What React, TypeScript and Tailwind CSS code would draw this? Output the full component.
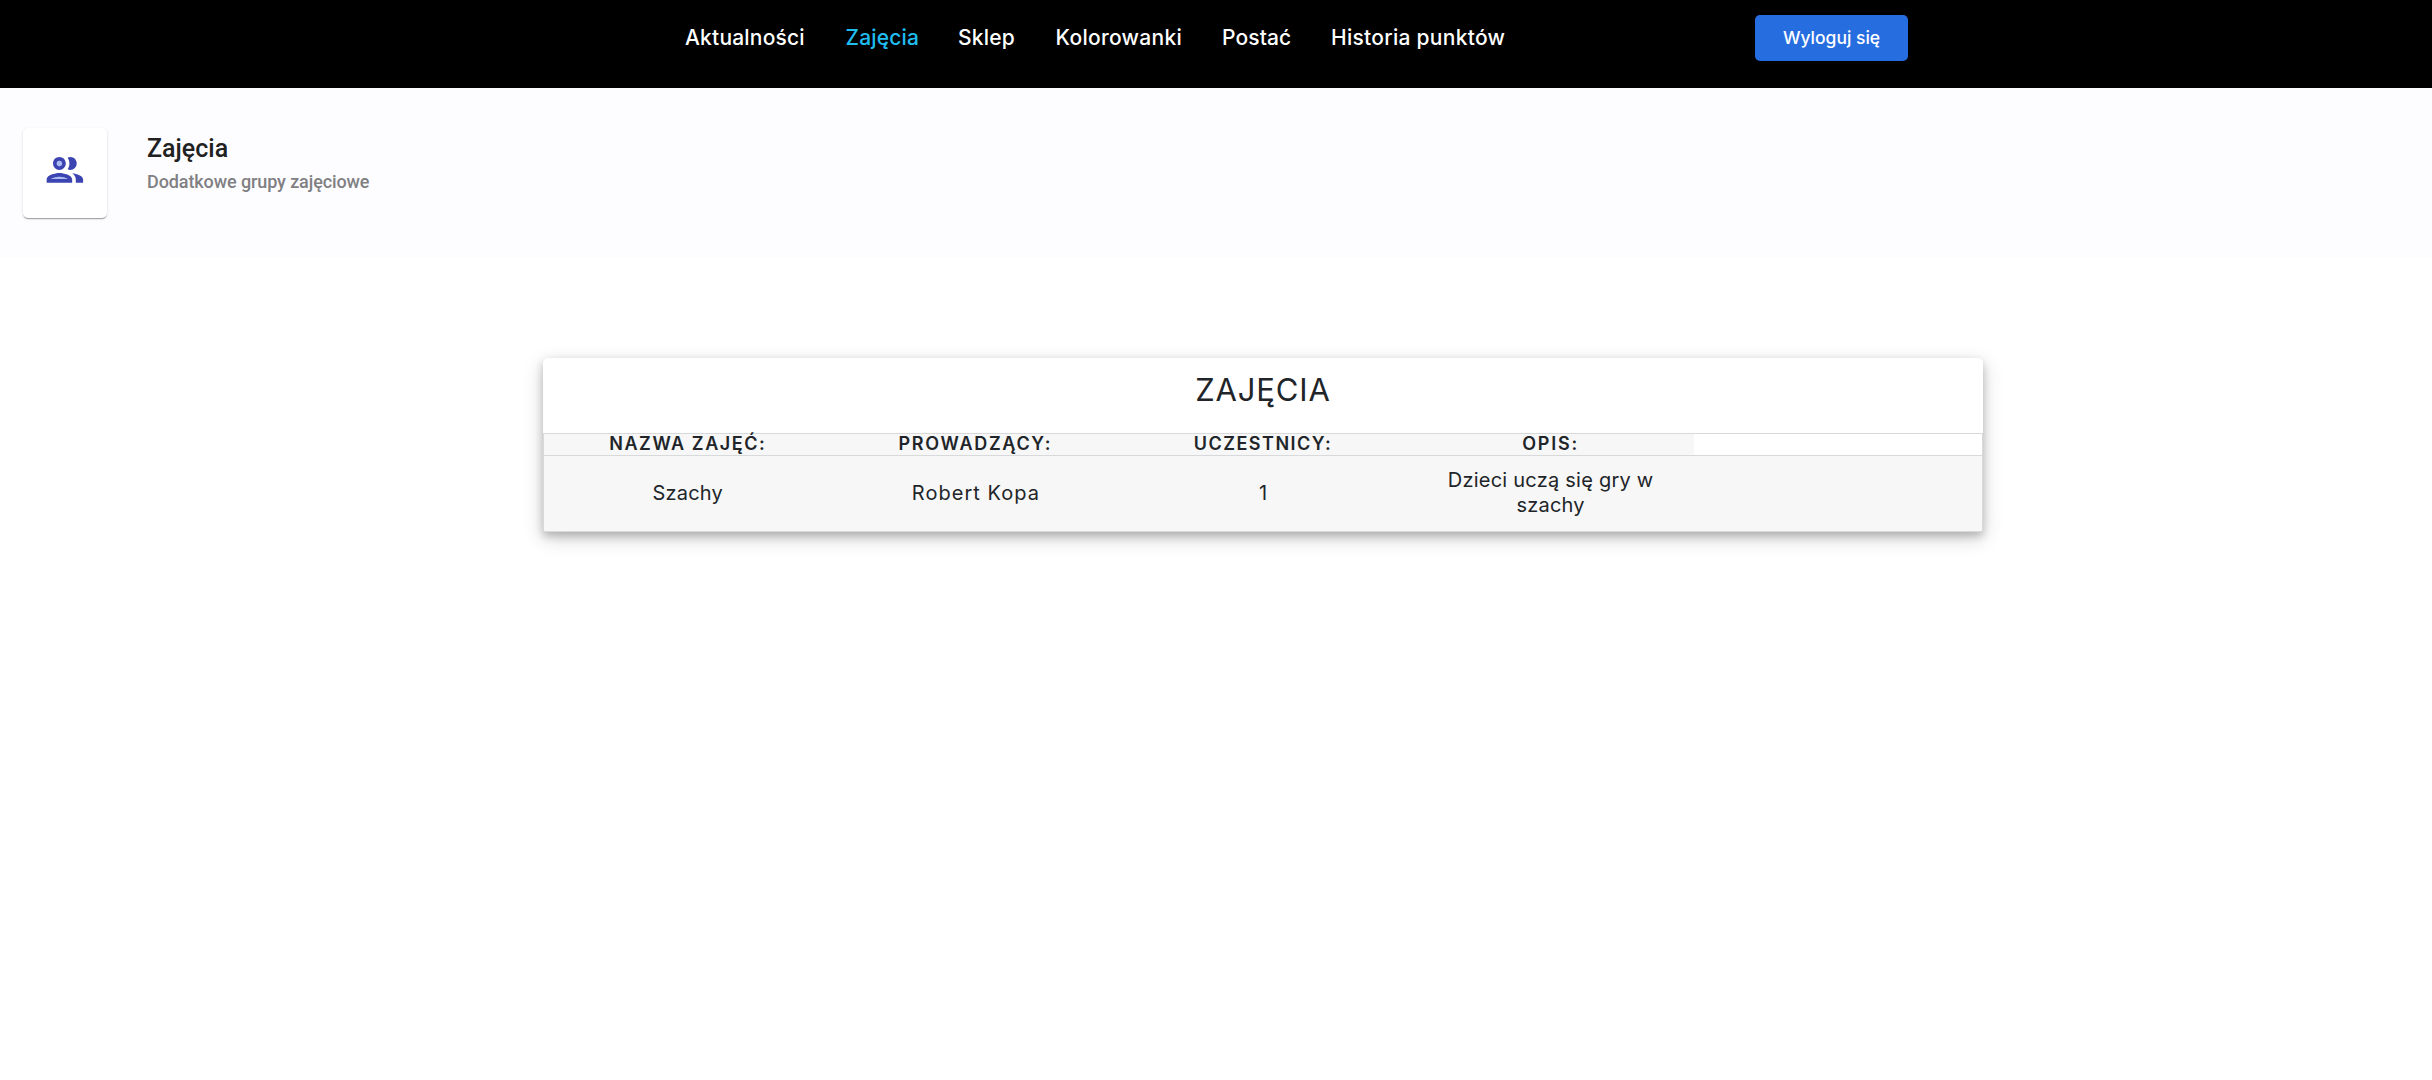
const navItems = [
  { label: 'Aktualności', box: 'w-[160.5px] tracking-[0.2px]' },
  { label: 'Zajęcia', box: 'w-[112.5px] tracking-[0.2px]', active: true },
  { label: 'Sklep', box: 'w-[97.5px] tracking-[0.2px]' },
  { label: 'Kolorowanki', box: 'w-[166.5px] tracking-[0.3px]' },
  { label: 'Postać', box: 'w-[109px] tracking-[0.1px]' },
  { label: 'Historia punktów', box: 'tracking-[0.28px]' },
]

const columns = [
  { label: 'NAZWA ZAJĘĆ:', spacing: 'tracking-[1.55px]' },
  { label: 'PROWADZĄCY:', spacing: 'tracking-[1.7px]' },
  { label: 'UCZESTNICY:', spacing: 'tracking-[1.5px]' },
  { label: 'OPIS:', spacing: 'tracking-[1.8px]' },
]

function GroupIcon() {
  return (
    <svg viewBox="0 0 24 24" className="block size-[43.75px] fill-[#3c44b1]">
      <path fill="#a9bdf5" d="M4.34 17h9.32c-.84-.58-2.87-1.25-4.66-1.25s-3.82.67-4.66 1.25z" />
      <circle fill="#a9bdf5" cx="9" cy="8.5" r="1.5" />
      <path d="M9 12c1.93 0 3.5-1.57 3.5-3.5S10.93 5 9 5 5.5 6.57 5.5 8.5 7.07 12 9 12zm0-5c.83 0 1.5.67 1.5 1.5S9.83 10 9 10s-1.5-.67-1.5-1.5S8.17 7 9 7zm0 6.75c-2.34 0-7 1.17-7 3.5V19h14v-1.75c0-2.33-4.66-3.5-7-3.5zM4.34 17c.84-.58 2.87-1.25 4.66-1.25s3.82.67 4.66 1.25H4.34zm11.7-3.19c1.16.84 1.96 1.96 1.96 3.44V19h4v-1.75c0-2.02-3.5-3.17-5.96-3.44zM15 12c1.93 0 3.5-1.57 3.5-3.5S16.93 5 15 5c-.54 0-1.04.13-1.5.35.63.89 1 1.98 1 3.15s-.37 2.26-1 3.15c.46.22.96.35 1.5.35z" />
    </svg>
  )
}

function NavBar() {
  return (
    <nav className="flex h-[88px] items-start bg-black pl-[685px]">
      <ul className="flex w-[1070px] pt-[23px] text-[21px] leading-[30px] font-medium whitespace-nowrap text-white">
        {navItems.map((item) => (
          <li key={item.label} className={`${item.box} ${item.active ? 'text-[#1fbdf0]' : ''}`}>
            {item.label}
          </li>
        ))}
      </ul>
      <button className="mt-[15px] h-[46px] w-[153px] rounded-[5px] bg-[#266de0] text-[17.5px] font-medium text-white">
        Wyloguj się
      </button>
    </nav>
  )
}

function PageHeader() {
  return (
    <header className="flex h-[169px] bg-[#fdfdff] pt-[40px] pl-[23px] font-['Roboto',sans-serif]">
      <div className="h-[90px] w-[84px] rounded-[5px] bg-white p-[20px] shadow-[0_2px_1px_-1px_rgba(0,0,0,0.2),0_1px_1px_0_rgba(0,0,0,0.14),0_1px_3px_0_rgba(0,0,0,0.12)]">
        <GroupIcon />
      </div>
      <div className="pt-[1px] pl-[40px]">
        <h1 className="text-[25px] leading-[40px] font-medium text-[#212121]">Zajęcia</h1>
        <p className="text-[18px] leading-[25px] font-medium tracking-[-0.1px] text-[#808083]">
          Dodatkowe grupy zajęciowe
        </p>
      </div>
    </header>
  )
}

function ClassesTable() {
  return (
    <section className="mt-[101px] ml-[543px] w-[1440px] rounded-t-[5px] bg-white text-center text-[#212529] shadow-[0_4px_8px_0_rgba(0,0,0,0.2),0_6px_20px_0_rgba(0,0,0,0.19)]">
      <h2 className="h-[75px] pt-[9px] text-[31px] leading-[45px] tracking-[0.86px]">ZAJĘCIA</h2>
      <div className="border border-[#d8d9da]">
        <div className="grid h-[21px] grid-cols-5 text-[18px] leading-[20px] font-semibold">
          {columns.map((c) => (
            <div key={c.label} className={`h-[21px] bg-[#f7f7f7] ${c.spacing}`}>
              {c.label}
            </div>
          ))}
        </div>
        <div className="grid h-[76px] grid-cols-5 items-center border-t border-[#d8d9da] bg-[#f7f7f7] pb-[1px] text-[20px] leading-[25px]">
          <div className="tracking-[0.19px]">Szachy</div>
          <div className="pl-[1px] tracking-[1.04px]">Robert Kopa</div>
          <div>1</div>
          <div className="px-[30px] tracking-[0.23px]">
            Dzieci uczą się gry w
            <br />
            szachy
          </div>
        </div>
      </div>
    </section>
  )
}

export default function App() {
  return (
    <div className="min-h-screen bg-white font-['Inter',sans-serif]">
      <NavBar />
      <PageHeader />
      <ClassesTable />
    </div>
  )
}
